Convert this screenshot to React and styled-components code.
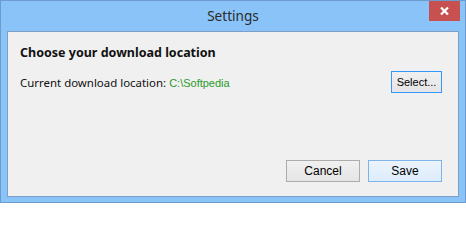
import React from "react";
import styled, { createGlobalStyle } from "styled-components";

const Global = createGlobalStyle`
  html, body { margin: 0; padding: 0; background: #ffffff; }
  * { box-sizing: border-box; }
`;

const Window = styled.div`
  width: 466px;
  height: 203px;
  border: 1px solid #6d9bd0;
  background: #8ac3f7;
  display: flex;
  flex-direction: column;
`;

const TitleBar = styled.div`
  height: 30px;
  display: grid;
  grid-template-columns: 1fr auto 1fr;
  align-items: start;
`;

const Title = styled.div`
  grid-column: 2;
  font-family: "Noto Sans", "Open Sans", sans-serif;
  font-size: 13.6px;
  line-height: 29px;
  color: #2b2b2b;
`;

const CloseButton = styled.div`
  grid-column: 3;
  justify-self: end;
  width: 31px;
  height: 20px;
  margin-right: 5px;
  background: #c75050;
  display: flex;
  align-items: center;
  justify-content: center;
`;

const Content = styled.div`
  flex: 1;
  margin: 0 6px 5px 6px;
  border: 1px solid #7d9fc8;
  background: #f0f0f0;
  padding: 12px 16px 14px 12px;
  display: flex;
  flex-direction: column;
`;

const Heading = styled.div`
  font-family: "Noto Sans", "Open Sans", sans-serif;
  font-weight: 700;
  font-size: 12.5px;
  line-height: 18px;
  color: #111;
`;

const Row = styled.div`
  margin-top: 9px;
  height: 22px;
  display: flex;
  align-items: center;
`;

const Label = styled.span`
  font-family: "Noto Sans", "Open Sans", sans-serif;
  font-size: 11.45px;
  color: #111;
`;

const Path = styled.span`
  font-family: "Liberation Sans", Arial, sans-serif;
  font-size: 11px;
  color: #2a9a2a;
  margin-left: 3px;
  margin-top: 1px;
`;

const Spacer = styled.div`
  flex: 1;
`;

const Button = styled.div`
  width: ${(p) => p.$w}px;
  height: 22px;
  display: flex;
  align-items: center;
  justify-content: center;
  font-family: "Liberation Sans", Arial, sans-serif;
  font-size: ${(p) => p.$fs || 11}px;
  color: #000;
  border: 1px solid ${(p) => (p.$focus ? "#3399ff" : p.$default ? "#7eb4ea" : "#acacac")};
  background: ${(p) =>
    p.$default
      ? "linear-gradient(#ecf4fc, #dcecfc)"
      : "linear-gradient(#f0f0f0, #e5e5e5)"};
`;

const Footer = styled.div`
  display: flex;
  justify-content: flex-end;
  gap: 8px;
`;

export default function App() {
  return (
    <>
      <Global />
      <Window>
        <TitleBar>
          <Title>Settings</Title>
          <CloseButton>
            <svg width="9" height="8" viewBox="0 0 9 8">
              <path d="M1 0.5 L8 7.5 M8 0.5 L1 7.5" stroke="#fff" strokeWidth="2.2" />
            </svg>
          </CloseButton>
        </TitleBar>
        <Content>
          <Heading>Choose your download location</Heading>
          <Row>
            <Label>Current download location:</Label>
            <Path>C:\Softpedia</Path>
            <Spacer />
            <Button $w={51} $focus>Select...</Button>
          </Row>
          <Spacer />
          <Footer>
            <Button $w={74} $fs={12}>Cancel</Button>
            <Button $w={74} $fs={12} $default>Save</Button>
          </Footer>
        </Content>
      </Window>
    </>
  );
}
